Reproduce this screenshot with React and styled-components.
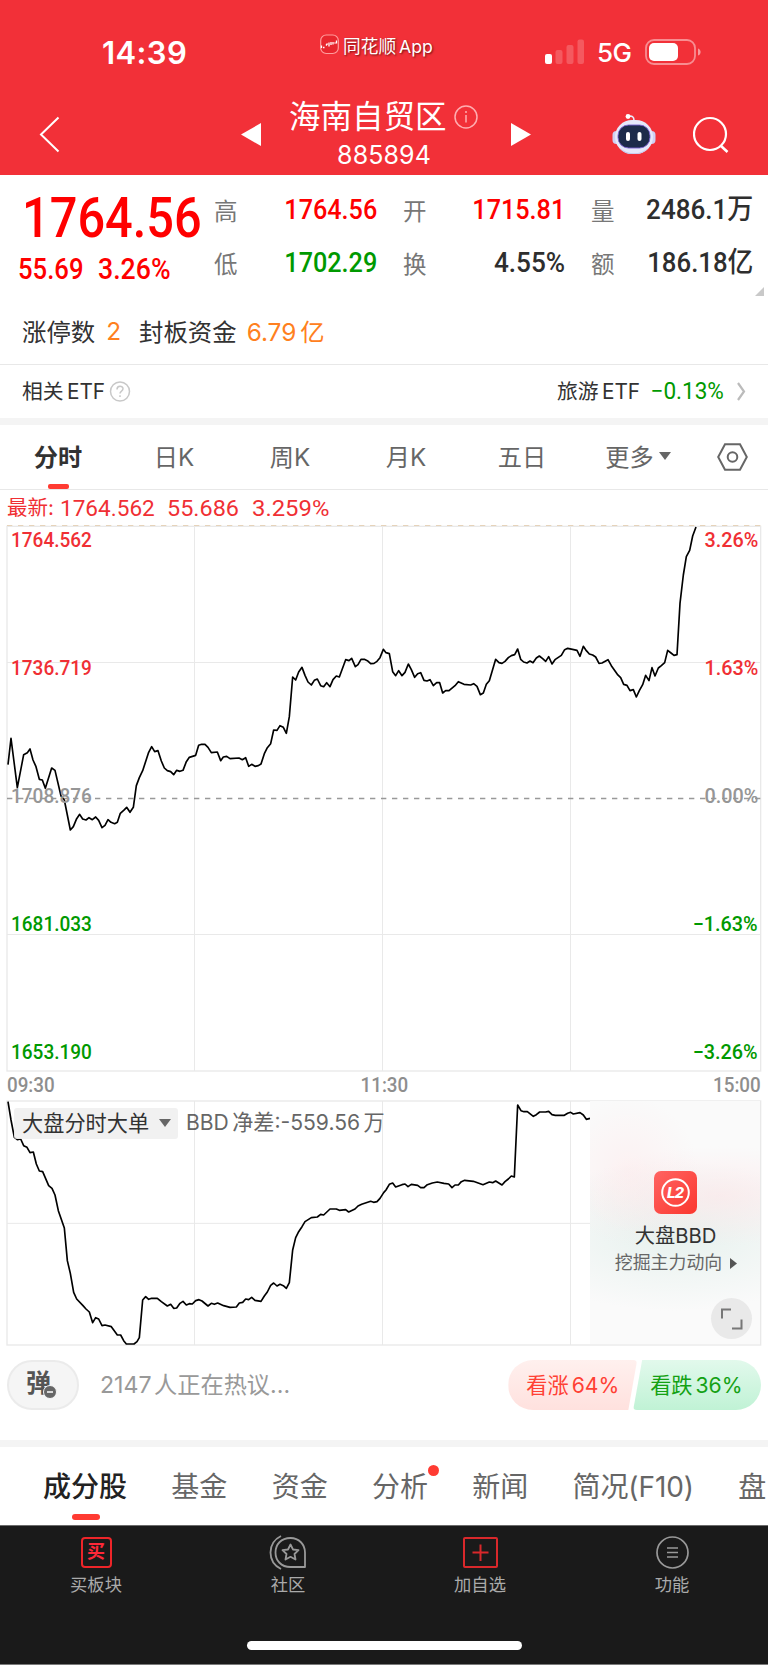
// Importation react, styled-components

import React from 'react'
import styled, { createGlobalStyle } from 'styled-components'

const GlobalStyle = createGlobalStyle`
  * {
    box-sizing: border-box;
  }
  body {
    margin: 0;
    background: #ffffff;
    font-family: 'Inter', 'Noto Sans CJK SC', sans-serif;
    color: #323232;
  }
  svg {
    display: block;
    flex: none;
  }
`

const colors = {
  red: '#ff0000',
  green: '#009900',
  dark: '#2e2e2e',
  chartRed: '#f02f34',
  grey: '#969696',
  orange: '#ff8020',
}

const Page = styled.div`
  width: 768px;
  height: 1665px;
  overflow: hidden;
  display: flex;
  flex-direction: column;
`

// Chiffres condensés (cours, pourcentages)

const Num = styled.span`
  display: inline-block;
  font-family: 'Roboto', 'Noto Sans CJK SC', sans-serif;
  font-weight: ${({ $weight }) => $weight || 500};
  font-size: ${({ $size }) => $size}px;
  line-height: 1;
  color: ${({ $color }) => $color || 'inherit'};
  white-space: nowrap;
  transform: scaleX(${({ $scale }) => $scale || 0.9});
  transform-origin: ${({ $origin }) => $origin || 'left'} center;
`

// Header rouge : barre de statut et titre

const Header = styled.header`
  height: 175px;
  flex: none;
  background: #f23038;
  color: #ffffff;
`

const StatusBar = styled.div`
  height: 98px;
  display: flex;
  padding: 32px 66px 0 102px;
`

const Clock = styled.div`
  width: 218px;
  font-size: 31px;
  font-weight: 600;
  line-height: 41px;
  letter-spacing: 0.4px;
`

const AppTag = styled.div`
  width: 225px;
  height: 25px;
  display: flex;
  align-items: center;
  gap: 4px;
  font-size: 17.7px;
  word-spacing: -2px;
  white-space: nowrap;
  text-shadow: 1px 1px 2px rgba(60, 0, 0, 0.7);
`

const Network = styled.div`
  width: 61px;
  padding-left: 13px;
  font-size: 26px;
  font-weight: 500;
  line-height: 42px;
  letter-spacing: -0.6px;
`

const StatusIcon = styled.svg`
  margin-top: 6px;
`

const NavBar = styled.div`
  height: 77px;
  display: flex;
  align-items: flex-start;
  padding-left: 39px;
`

const NavIcon = styled.svg`
  margin-top: ${({ $top }) => $top}px;
  margin-left: ${({ $left }) => $left || 0}px;
`

const TitleBlock = styled.div`
  width: 250px;
  display: flex;
  flex-direction: column;
`

const Title = styled.h1`
  margin: 0;
  padding-left: 28px;
  height: 37px;
  display: flex;
  align-items: center;
  gap: 7px;
  font-size: 31.5px;
  font-weight: 400;
  line-height: 37px;
  white-space: nowrap;
`

const Code = styled.div`
  text-align: center;
  font-size: 25px;
  line-height: 40px;
  letter-spacing: 0.1px;
  padding-right: 4px;
`

// Bloc cotation

const Quote = styled.section`
  height: 190px;
  flex: none;
  border-bottom: 1px solid #e8e8e8;
`

const QuoteTop = styled.div`
  display: flex;
  height: 113px;
  position: relative;
`

const PriceBox = styled.div`
  width: 214px;
  padding: 15px 0 0 22px;
`

const Changes = styled.div`
  display: flex;
  margin: 9px 0 0 -4px;
`

const ChangeCell = styled.div`
  width: 79.5px;
`

const QuoteGrid = styled.div`
  display: grid;
  grid-template-columns: 163px 162px 162px;
  grid-template-rows: 53px 53px;
  column-gap: 26px;
  padding-top: 8px;
`

const QuoteCell = styled.div`
  display: flex;
  align-items: center;
  justify-content: space-between;
`

const QuoteLabel = styled.span`
  font-size: 23.5px;
  color: #777777;
`

const Corner = styled.div`
  position: absolute;
  right: 4px;
  bottom: -8px;
  border-left: 9px solid transparent;
  border-bottom: 9px solid #c9c9c9;
`

const Limits = styled.div`
  display: flex;
  align-items: center;
  height: 85px;
  padding-left: 22px;
  font-size: 24.4px;
  word-spacing: -3px;
  white-space: nowrap;
`

const Orange = styled.span`
  color: ${colors.orange};
  font-size: 24.4px;
  margin: 0 ${({ $right }) => $right || 0}px 0 ${({ $left }) => $left || 11}px;
`

// Ligne ETF

const EtfRow = styled.section`
  height: 53px;
  flex: none;
  display: flex;
  align-items: center;
  padding: 0 22px;
  font-size: 20.8px;
  word-spacing: -2.5px;
  white-space: nowrap;
`

const EtfText = styled.span`
  margin: -3px ${({ $right }) => $right || 0}px 0 0;
`

const Spacer = styled.div`
  flex: 1;
`

const Band = styled.div`
  height: 7px;
  flex: none;
  background: #f4f4f4;
`

// Onglets de période

const PeriodTabs = styled.nav`
  height: 65px;
  flex: none;
  display: flex;
  border-bottom: 1px solid #e8e8e8;
`

const PeriodTab = styled.div`
  width: ${({ $width }) => $width || 116}px;
  display: flex;
  align-items: center;
  justify-content: center;
  gap: 5px;
  position: relative;
  padding-bottom: ${({ $width }) => ($width ? 0 : 3)}px;
  font-size: 24.2px;
  font-weight: ${({ $active }) => ($active ? 700 : 400)};
  color: ${({ $active }) => ($active ? '#323232' : '#666666')};
  &::after {
    content: '';
    display: ${({ $active }) => ($active ? 'block' : 'none')};
    position: absolute;
    bottom: 0;
    width: 21px;
    height: 5px;
    border-radius: 2px;
    background: #ff3b32;
  }
`

const Latest = styled.div`
  height: 33px;
  flex: none;
  display: flex;
  align-items: center;
  padding: 4px 0 0 7px;
  font-size: 20.5px;
  color: ${colors.chartRed};
`

const LatestCell = styled.div`
  width: ${({ $width }) => $width}px;
  line-height: 1;
`

// Graphique

const ChartBox = styled.section`
  height: ${({ $height }) => $height}px;
  flex: none;
  position: relative;
`

const AxisLabels = styled.div`
  position: absolute;
  top: 6.5px;
  bottom: 11.5px;
  ${({ $side }) => ($side === 'left' ? 'left: 11px;' : 'right: 10px;')}
  display: flex;
  flex-direction: column;
  justify-content: space-between;
  align-items: ${({ $side }) => ($side === 'left' ? 'flex-start' : 'flex-end')};
`

const TimeAxis = styled.div`
  height: 26px;
  flex: none;
  display: flex;
  justify-content: space-between;
  align-items: center;
  padding: 0 7px 2px;
  color: #8e8e8e;
`

const ChartHead = styled.div`
  position: absolute;
  top: 9px;
  left: 14px;
  display: flex;
  align-items: center;
  gap: 8px;
  font-size: 21.1px;
  line-height: 28px;
  word-spacing: -2.5px;
  color: #666666;
  white-space: nowrap;
`

const ChartHeadText = styled.span`
  margin-top: -1px;
`

const ChartSelect = styled.div`
  width: 164px;
  height: 31px;
  padding: 0 0 1px 8px;
  display: flex;
  align-items: center;
  gap: 10px;
  border-radius: 3px;
  background: rgba(240, 240, 240, 0.9);
  font-size: 21.2px;
  color: #323232;
`

const Promo = styled.div`
  position: absolute;
  top: 2px;
  right: 8px;
  width: 170px;
  height: 243px;
  padding-top: 70px;
  display: flex;
  flex-direction: column;
  align-items: center;
  background:
    radial-gradient(ellipse 70px 75px at 38px 70px, rgba(255, 228, 230, 0.4), transparent),
    radial-gradient(ellipse 140px 50px at 130px 95px, rgba(255, 225, 228, 0.5), transparent),
    radial-gradient(ellipse 170px 75px at 85px 135px, rgba(226, 239, 235, 0.8), transparent),
    #fafafa;
`

const PromoTitle = styled.div`
  margin: 7px 0 0 1px;
  font-size: 20.3px;
  line-height: 30px;
`

const PromoText = styled.div`
  display: flex;
  align-items: center;
  gap: 8px;
  margin: -1px 0 0 2px;
  font-size: 17.9px;
  line-height: 26px;
  color: #666666;
`

const ExpandButton = styled.div`
  position: absolute;
  right: 8px;
  bottom: 5px;
  width: 41px;
  height: 41px;
  border-radius: 50%;
  display: flex;
  align-items: center;
  justify-content: center;
  background: #e9e9e9;
`

// Commentaires et vote

const TalkRow = styled.section`
  height: 93px;
  flex: none;
  display: flex;
  align-items: flex-start;
  padding: 13px 7px 0;
`

const Bullet = styled.div`
  width: 72px;
  height: 50px;
  border: 2px solid #ebebeb;
  border-radius: 25px;
  background: #f5f5f5;
  padding-left: 17px;
  font-size: 25px;
  font-weight: 700;
  line-height: 43px;
  color: #555555;
  position: relative;
`

const BulletBadge = styled.svg`
  position: absolute;
  left: 34px;
  top: 23px;
`

const TalkText = styled.div`
  width: 408px;
  margin-left: 21px;
  font-size: 23.2px;
  line-height: 51px;
  word-spacing: -4px;
  color: #999999;
`

const Vote = styled.div`
  width: ${({ $down }) => ($down ? 128 : 129)}px;
  height: 50px;
  margin-left: ${({ $down }) => ($down ? -4 : 1)}px;
  border-radius: ${({ $down }) => ($down ? '4px 25px 25px 4px' : '25px 4px 4px 25px')};
  clip-path: ${({ $down }) =>
    $down ? 'polygon(9px 0, 100% 0, 100% 100%, 0 100%)' : 'polygon(0 0, 100% 0, 120px 100%, 0 100%)'};
  background: ${({ $down }) =>
    $down ? 'linear-gradient(#e2f9ec, #c0f2d5)' : 'linear-gradient(#fff0ee, #ffe1de)'};
  color: ${({ $down }) => ($down ? '#14a114' : '#ff4034')};
  padding-left: ${({ $down }) => ($down ? 17 : 18)}px;
  font-size: 21.2px;
  line-height: 51px;
  word-spacing: -3px;
  white-space: nowrap;
`

// Onglets du bas de page

const InfoTabs = styled.nav`
  height: 78px;
  flex: none;
  display: flex;
  gap: 44.3px;
  padding-left: 43px;
  overflow: hidden;
`

const InfoTab = styled.div`
  flex: none;
  position: relative;
  font-size: 28px;
  font-weight: ${({ $active }) => ($active ? 500 : 400)};
  color: ${({ $active }) => ($active ? '#222222' : '#666666')};
  letter-spacing: ${({ $tight }) => ($tight ? -0.1 : 0)}px;
  line-height: 80px;
  white-space: nowrap;
  &::after {
    content: '';
    display: ${({ $active }) => ($active ? 'block' : 'none')};
    position: absolute;
    left: 29px;
    top: 67px;
    width: 28px;
    height: 6px;
    border-radius: 3px;
    background: #ff3b32;
  }
`

const Dot = styled.i`
  position: absolute;
  right: -11px;
  top: 18px;
  width: 11px;
  height: 11px;
  border-radius: 50%;
  background: #ff3b32;
`

const Footer = styled.footer`
  height: 140px;
  flex: none;
  display: flex;
  flex-direction: column;
  align-items: center;
  background: #1a1a1a;
  border-top: 1px solid #6b6b6b;
  border-bottom: 1px solid #7a7a7a;
`

const FooterNav = styled.div`
  width: 100%;
  height: 115px;
  display: flex;
`

const FooterItem = styled.div`
  width: 192px;
  padding-top: 9px;
  display: flex;
  flex-direction: column;
  align-items: center;
  font-size: 17.3px;
  line-height: 26px;
  color: #aaaaaa;
`

const FooterIcon = styled.svg`
  margin-bottom: 2px;
`

const BuyIcon = styled.div`
  width: 31px;
  height: 31px;
  margin: 2px 0 4px;
  border: 2px solid #ee2529;
  border-radius: 4px;
  font-size: 18px;
  font-weight: 700;
  line-height: 26px;
  text-align: center;
  color: #ff2838;
`

const HomeBar = styled.div`
  width: 275px;
  height: 9px;
  border-radius: 5px;
  background: #ffffff;
`

// Données : chaque unité vaut un tiers de pixel

const priceLine =
  '24,734 33,655 52,803 71,704 82,698 90,687 99,720 108,740 118,778 127,780 136,805 155,744 165,751 183,828 193,840 211,930 220,920 230,896 239,883 248,897 258,900 267,893 277,899 287,891 296,901 306,923 315,916 324,899 333,907 344,911 352,907 361,880 371,871 380,862 390,877 400,862 409,797 418,773 428,752 446,697 455,680 464,695 474,692 484,723 493,744 502,752 512,755 521,764 530,751 540,754 549,751 559,725 568,712 587,706 596,676 605,673 615,673 624,682 634,698 652,696 662,722 670,711 680,709 690,716 717,714 727,719 737,713 746,739 755,733 765,739 775,737 783,732 793,701 802,683 812,671 821,630 831,631 840,617 850,622 859,640 868,590 878,471 887,480 896,456 906,442 915,466 924,486 934,495 943,481 952,477 962,497 971,500 980,488 990,500 999,479 1009,468 1018,471 1037,419 1047,422 1055,415 1066,440 1074,434 1083,418 1093,418 1102,422 1112,431 1122,430 1131,424 1140,413 1150,388 1158,398 1168,401 1178,455 1187,467 1196,452 1206,467 1215,457 1225,432 1234,449 1244,472 1253,461 1262,458 1272,481 1281,483 1290,479 1300,497 1310,488 1319,488 1328,519 1337,512 1347,512 1365,497 1375,485 1392,493 1412,495 1421,491 1431,499 1441,524 1450,519 1459,493 1468,482 1487,418 1497,428 1506,430 1515,424 1525,413 1534,407 1544,404 1553,387 1562,418 1571,426 1581,429 1590,423 1599,428 1609,414 1618,408 1628,416 1637,424 1646,410 1656,432 1665,419 1675,412 1684,406 1694,389 1703,385 1721,389 1731,391 1740,409 1750,379 1759,392 1768,402 1778,405 1787,411 1797,430 1806,429 1824,419 1834,437 1852,463 1862,473 1871,493 1881,496 1890,512 1900,509 1909,531 1918,512 1928,494 1937,466 1947,482 1956,443 1965,468 1975,444 1984,437 1994,428 2003,391 2013,399 2022,406 2031,404 2040,250 2050,165 2059,110 2069,91 2078,48 2088,21'

const bbdLine =
  '24,125 33,180 43,232 52,239 62,237 71,257 81,262 90,278 100,276 109,312 118,333 128,335 146,377 156,385 165,405 175,452 193,504 202,602 211,640 221,697 230,717 249,737 258,747 268,756 278,788 287,773 296,777 306,797 315,795 334,800 352,825 362,825 371,842 379,852 402,852 411,845 418,833 428,720 437,710 446,718 455,715 472,715 484,725 502,738 512,733 521,745 530,744 540,730 549,724 559,735 568,731 577,732 587,722 597,719 606,723 624,738 634,730 643,733 653,729 671,737 690,742 709,741 718,729 728,727 737,717 746,719 755,712 765,721 783,724 793,708 802,696 812,676 821,669 831,678 840,673 850,677 859,685 868,668 878,570 887,533 896,515 906,500 915,485 934,473 952,471 962,463 971,465 990,447 1009,447 1018,451 1037,449 1046,456 1065,447 1074,438 1085,433 1112,424 1121,427 1131,425 1140,415 1151,398 1158,390 1168,373 1178,369 1187,381 1206,374 1215,372 1224,380 1234,373 1253,376 1262,383 1272,383 1282,374 1297,369 1312,366 1332,370 1346,372 1356,383 1365,375 1375,375 1384,365 1394,361 1420,364 1449,374 1468,366 1478,368 1487,363 1506,375 1515,365 1525,357 1534,348 1543,351 1553,135 1563,152 1572,155 1582,155 1600,169 1609,164 1619,156 1637,156 1646,154 1656,164 1666,166 1693,166 1703,160 1712,157 1720,162 1740,158 1750,165 1759,178 1770,175'

const quotes = [
  { label: '高', value: '1764.56', color: colors.red },
  { label: '开', value: '1715.81', color: colors.red },
  { label: '量', value: '2486.1万', color: colors.dark, scale: 0.93 },
  { label: '低', value: '1702.29', color: colors.green },
  { label: '换', value: '4.55%', color: colors.dark, scale: 0.935 },
  { label: '额', value: '186.18亿', color: colors.dark, scale: 0.92 },
]

const axis = [
  { price: '1764.562', rate: '3.26%', color: colors.chartRed },
  { price: '1736.719', rate: '1.63%', color: colors.chartRed },
  { price: '1708.876', rate: '0.00%', color: colors.grey },
  { price: '1681.033', rate: '−1.63%', color: colors.green },
  { price: '1653.190', rate: '−3.26%', color: colors.green },
]

const infoTabs = [
  { name: '成分股', active: true },
  { name: '基金' },
  { name: '资金' },
  { name: '分析', dot: true },
  { name: '新闻' },
  { name: '简况(F10)', tight: true },
  { name: '盘' },
]

const Robot = () => (
  <NavIcon $top={14} $left={81} width="44" height="42" viewBox="0 0 44 42">
    <path d="M16 4.5c4-1 6 0 6 4" fill="none" stroke="#e9e9fa" strokeWidth="1.6" />
    <circle cx="16" cy="4.5" r="2.4" fill="#fff" />
    <rect x="0.5" y="19" width="43" height="13" rx="4" fill="#cfd0f4" />
    <rect x="3" y="8" width="38" height="34" rx="17" fill="#e6e8fa" />
    <path d="M8 36c7 7 21 7 28 0c-5 8-23 9-28 0z" fill="#c4c8ec" />
    <rect x="6" y="13" width="32" height="23" rx="10.5" fill="#1d2b4a" stroke="#7960d0" strokeWidth="0.9" />
    <rect x="14" y="20" width="4" height="9" rx="2" fill="#fff" />
    <rect x="25.5" y="20" width="4" height="9" rx="2" fill="#fff" />
  </NavIcon>
)

const Grid = ({ top, bottom, rows, right }) => (
  <g stroke="#e9e9e9" strokeWidth="3" fill="none">
    <rect x="21" y={top} width="2261" height={bottom - top} strokeWidth="4" />
    <path d={`M583.5 ${top}V${bottom}M1147.5 ${top}V${bottom}M1711.5 ${top}V${bottom}`} />
    {rows.map((y) => (
      <path key={y} d={`M21 ${y}H${right}`} />
    ))}
  </g>
)

const App = () => {
  return (
    <Page>
      <GlobalStyle />
      <Header>
        <StatusBar>
          <Clock>14:39</Clock>
          <AppTag>
            <svg width="19" height="21" viewBox="0 0 19 21">
              <rect x="0.7" y="1" width="17.6" height="18.5" rx="5.5" fill="#e8262e" stroke="#ff9c9c" strokeWidth="1.2" />
              <path d="M1.500 11.500v2.500M3 13.500h1.500M6 11.500l1.500-2M9 8.500v4M11 11V8M13 8v2.500M14.500 9h1M16.500 6.500v3" stroke="#fff" strokeWidth="1.3" fill="none" />
            </svg>
            <span>同花顺 App</span>
          </AppTag>
          <StatusIcon width="39" height="27" viewBox="0 0 39 27" fill="#fff">
            <rect x="0" y="16" width="7" height="10" rx="2" />
            <rect x="10.5" y="12" width="7" height="14" rx="2" opacity="0.2" />
            <rect x="21.5" y="7" width="7" height="19" rx="2" opacity="0.2" />
            <rect x="32.5" y="1.5" width="6.5" height="24.5" rx="2" opacity="0.2" />
          </StatusIcon>
          <Network>5G</Network>
          <StatusIcon width="57" height="29" viewBox="0 0 57 29">
            <rect x="1" y="2" width="49" height="24" rx="8" fill="none" stroke="#fff" strokeOpacity="0.45" strokeWidth="1.8" />
            <rect x="4" y="5" width="29" height="18" rx="5" fill="#fff" />
            <path d="M53 10.500c3.500 1 3.500 6 0 7z" fill="#fff" fillOpacity="0.5" />
          </StatusIcon>
        </StatusBar>
        <NavBar>
          <NavIcon $top={18} width="21" height="38" viewBox="0 0 21 38">
            <path d="M19.500 1.500L2 18.500L19.500 35.500" fill="none" stroke="#fff" strokeWidth="2" />
          </NavIcon>
          <NavIcon $top={25} $left={181} width="20" height="23" viewBox="0 0 20 23">
            <path d="M20 0V23L0 11.500z" fill="#fff" />
          </NavIcon>
          <TitleBlock>
            <Title>
              海南自贸区
              <svg width="24" height="24" viewBox="0 0 24 24" fill="none" stroke="#ffadb0" strokeWidth="1.5">
                <circle cx="12" cy="12" r="11" />
                <path d="M12 10v7.500M12 6v2" />
              </svg>
            </Title>
            <Code>885894</Code>
          </TitleBlock>
          <NavIcon $top={25} width="20" height="23" viewBox="0 0 20 23">
            <path d="M0 0V23L20 11.500z" fill="#fff" />
          </NavIcon>
          <Robot />
          <NavIcon $top={18} $left={37} width="37" height="37" viewBox="0 0 37 37">
            <circle cx="17" cy="18" r="16" fill="none" stroke="#fff" strokeWidth="2.2" />
            <path d="M27.500 29.500l7 6.500" stroke="#fff" strokeWidth="2.6" />
          </NavIcon>
        </NavBar>
      </Header>

      <Quote>
        <QuoteTop>
          <PriceBox>
            <Num $size={56} $scale={0.87} $color={colors.red}>1764.56</Num>
            <Changes>
              <ChangeCell>
                <Num $size={29} $scale={0.885} $color={colors.red}>55.69</Num>
              </ChangeCell>
              <ChangeCell>
                <Num $size={29} $scale={0.92} $color={colors.red}>3.26%</Num>
              </ChangeCell>
            </Changes>
          </PriceBox>
          <QuoteGrid>
            {quotes.map(({ label, value, color, scale }) => (
              <QuoteCell key={label}>
                <QuoteLabel>{label}</QuoteLabel>
                <Num $size={28} $scale={scale} $origin="right" $color={color}>{value}</Num>
              </QuoteCell>
            ))}
          </QuoteGrid>
          <Corner />
        </QuoteTop>
        <Limits>
          涨停数<Orange $right={18}>2</Orange>
          封板资金<Orange $left={10}>6.79 亿</Orange>
        </Limits>
      </Quote>

      <EtfRow>
        <EtfText>相关 ETF</EtfText>
        <svg width="26" height="22" viewBox="0 0 26 22" fill="none" stroke="#c8c8c8" strokeWidth="1.5">
          <circle cx="15" cy="10.5" r="9.5" />
          <path d="M12 8.500c0-4.500 6-4 6-.7c0 2.300-3 2.200-3 4.700M15 14.300v1.700" />
        </svg>
        <Spacer />
        <EtfText $right={9}>旅游 ETF</EtfText>
        <Num $size={23} $weight={400} $scale={0.98} $color={colors.green} $origin="right">−0.13%</Num>
        <svg width="22" height="22" viewBox="0 0 22 22">
          <path d="M14 2l6 8.500l-6 8.500" fill="none" stroke="#bbbbbb" strokeWidth="2.2" />
        </svg>
      </EtfRow>
      <Band />

      <PeriodTabs>
        <PeriodTab $active>分时</PeriodTab>
        <PeriodTab>日K</PeriodTab>
        <PeriodTab>周K</PeriodTab>
        <PeriodTab>月K</PeriodTab>
        <PeriodTab>五日</PeriodTab>
        <PeriodTab>
          更多
          <svg width="12" height="8" viewBox="0 0 12 8">
            <path d="M0 0H12L6 8z" fill="#666" />
          </svg>
        </PeriodTab>
        <PeriodTab $width={72}>
          <svg width="31" height="28" viewBox="0 0 31 28" fill="none" stroke="#666" strokeWidth="2">
            <path d="M8 1.200H23L29.800 14L23 26.800H8L1.200 14z" />
            <circle cx="15.5" cy="14" r="4.8" />
          </svg>
        </PeriodTab>
      </PeriodTabs>

      <Latest>
        <LatestCell $width={53}>最新:</LatestCell>
        <LatestCell $width={107}><Num $size={21.5} $weight={400} $scale={1.05}>1764.562</Num></LatestCell>
        <LatestCell $width={85}><Num $size={21.5} $weight={400} $scale={1.09}>55.686</Num></LatestCell>
        <LatestCell $width={85}><Num $size={21.5} $weight={400} $scale={1.11}>3.259%</Num></LatestCell>
      </Latest>

      <ChartBox $height={550}>
        <svg width="768" height="550" viewBox="0 9 2304 1650">
          <Grid top={19} bottom={1653} rows={[427.5, 1243.5]} right={2282} />
          <path d="M21 16.500H2284" stroke="#e6d3ba" strokeWidth="3" strokeDasharray="16 17" />
          <path d="M21 835.500H2284" stroke="#999" strokeWidth="4" strokeDasharray="16 17" />
          <polyline points={priceLine} fill="none" stroke="#000" strokeWidth="5" strokeLinejoin="round" />
        </svg>
        <AxisLabels $side="left">
          {axis.map(({ price, color }) => (
            <Num key={price} $size={20} $scale={0.95} $color={color}>{price}</Num>
          ))}
        </AxisLabels>
        <AxisLabels $side="right">
          {axis.map(({ rate, color }) => (
            <Num key={rate} $size={20} $color={color} $scale={0.99} $origin="right">{rate}</Num>
          ))}
        </AxisLabels>
      </ChartBox>

      <TimeAxis>
        <Num $size={20} $scale={0.94}>09:30</Num>
        <Num $size={20} $scale={0.94} $origin="center">11:30</Num>
        <Num $size={20} $scale={0.94} $origin="right">15:00</Num>
      </TimeAxis>

      <ChartBox $height={248}>
        <svg width="768" height="248" viewBox="0 117 2304 744">
          <Grid top={123} bottom={855} rows={[490]} right={2282} />
          <polyline points={bbdLine} fill="none" stroke="#000" strokeWidth="5" strokeLinejoin="round" />
        </svg>
        <ChartHead>
          <ChartSelect>
            大盘分时大单
            <svg width="12" height="8" viewBox="0 0 12 8">
              <path d="M0 0H12L6 8z" fill="#666" />
            </svg>
          </ChartSelect>
          <ChartHeadText>BBD 净差:-559.56 万</ChartHeadText>
        </ChartHead>
        <Promo>
          <svg width="43" height="43" viewBox="0 0 43 43">
            <defs>
              <linearGradient id="l2" x1="0" y1="0" x2="1" y2="1">
                <stop offset="0" stopColor="#ff6462" />
                <stop offset="1" stopColor="#fb372f" />
              </linearGradient>
            </defs>
            <rect width="43" height="43" rx="7" fill="url(#l2)" />
            <circle cx="21.5" cy="21.5" r="13.3" fill="none" stroke="#fff" strokeWidth="2" />
            <text x="21" y="27" textAnchor="middle" fontFamily="Inter" fontSize="15" fontWeight="800" fontStyle="italic" letterSpacing="-1" fill="#fff">L2</text>
          </svg>
          <PromoTitle>大盘BBD</PromoTitle>
          <PromoText>
            挖掘主力动向
            <svg width="7" height="11" viewBox="0 0 7 11">
              <path d="M0 0L7 5.500L0 11z" fill="#555" />
            </svg>
          </PromoText>
          <ExpandButton>
            <svg width="23" height="22" viewBox="0 0 23 22" fill="none" stroke="#777" strokeWidth="2">
              <path d="M2 10.500V1.500H11M21.500 11.500V20.500H12" />
            </svg>
          </ExpandButton>
        </Promo>
      </ChartBox>

      <TalkRow>
        <Bullet>
          弹
          <BulletBadge width="14" height="14" viewBox="0 0 14 14">
            <circle cx="7" cy="7" r="6.5" fill="#666" stroke="#f5f5f5" />
            <path d="M4 7H10" stroke="#fff" strokeWidth="1.5" />
          </BulletBadge>
        </Bullet>
        <TalkText>2147 人正在热议...</TalkText>
        <Vote>看涨 64%</Vote>
        <Vote $down>看跌 36%</Vote>
      </TalkRow>
      <Band />

      <InfoTabs>
        {infoTabs.map(({ name, active, dot, tight }) => (
          <InfoTab key={name} $active={active} $tight={tight}>
            {name}
            {dot && <Dot />}
          </InfoTab>
        ))}
      </InfoTabs>

      <Footer>
        <FooterNav>
          <FooterItem>
            <BuyIcon>买</BuyIcon>
            买板块
          </FooterItem>
          <FooterItem>
            <FooterIcon width="38" height="35" viewBox="0 0 38 35" fill="none" stroke="#999" strokeWidth="1.8" strokeLinejoin="round">
              <path d="M21.500 3C12 3 6.500 9.500 6.500 17.500S12 32 21.500 32H36V17.500C36 9.500 30 3 21.500 3z" />
              <path d="M12 1C-2 8-2 27 12 34" />
              <path d="M21.500 9.500l2.500 5l5.500.7l-4 3.800l1 5.500l-5-2.700l-5 2.700l1-5.500l-4-3.800l5.500-.7z" />
            </FooterIcon>
            社区
          </FooterItem>
          <FooterItem>
            <FooterIcon width="35" height="35" viewBox="0 0 35 35" fill="none" stroke="#d9282b" strokeWidth="2">
              <rect x="1" y="3" width="33" height="29" rx="1" />
              <path d="M17.500 9.500V26M9.500 17.500H25.500" />
            </FooterIcon>
            加自选
          </FooterItem>
          <FooterItem>
            <FooterIcon width="35" height="35" viewBox="0 0 35 35" fill="none" stroke="#999" strokeWidth="1.7">
              <circle cx="17.5" cy="17.5" r="15.5" />
              <path d="M12 13H23M12 17.500H23M12 22H23" />
            </FooterIcon>
            功能
          </FooterItem>
        </FooterNav>
        <HomeBar />
      </Footer>
    </Page>
  )
}

export default App
